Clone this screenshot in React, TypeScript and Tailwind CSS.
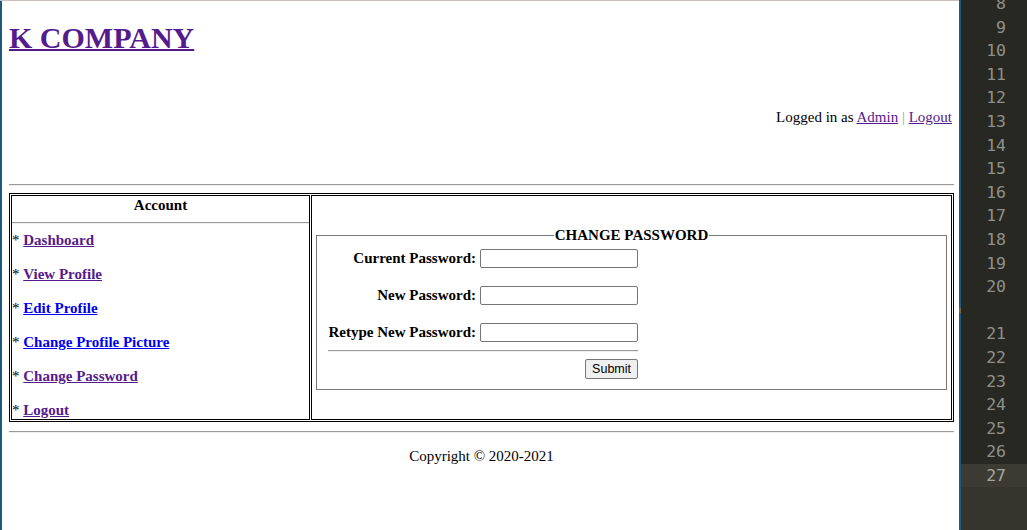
import React from "react";

const serif = "font-['Liberation_Serif','Times_New_Roman',serif]";

function Hr({ className = "" }: { className?: string }) {
  return <div className={`h-[2px] border-t border-b border-t-[#9a9a9a] border-b-[#eeeeee] ${className}`} />;
}

const links: { label: string; color: string }[] = [
  { label: "Dashboard", color: "text-[#551a8b]" },
  { label: "View Profile", color: "text-[#551a8b]" },
  { label: "Edit Profile", color: "text-[#0000ee]" },
  { label: "Change Profile Picture", color: "text-[#0000ee]" },
  { label: "Change Password", color: "text-[#551a8b]" },
  { label: "Logout", color: "text-[#551a8b]" },
];

const rows = ["Current Password:", "New Password:", "Retype New Password:"];

const lineNums: string[] = ["8", "9", "10", "11", "12", "13", "14", "15", "16", "17", "18", "19", "20", "", "21", "22", "23", "24", "25", "26"];

export default function App() {
  return (
    <div className="flex w-[1027px] h-[530px] overflow-hidden bg-white">
      {/* page */}
      <div className="flex flex-col w-[959px] shrink-0">
        <div className="h-px bg-[#cbc0bd]" />
        <div className="flex flex-1">
          <div className="w-[2px] bg-[#1d5a7c]" />
          <div className={`flex-1 pl-[7px] pr-[5px] text-[15px] leading-[17px] text-black ${serif}`}>
            <h1 className="mt-[20px] text-[30px] leading-[34px] font-bold">
              <a className="text-[#551a8b] underline decoration-2 cursor-pointer">K COMPANY</a>
            </h1>
            <div className="mt-[54px] text-right pr-[2px]">
              Logged in as <a className="text-[#551a8b] underline">Admin</a>{" "}
              <span className="text-[#9a9aa8]">|</span>{" "}
              <a className="text-[#551a8b] underline">Logout</a>
            </div>
            <Hr className="mt-[58px]" />
            {/* table */}
            <div className="mt-[7px] border border-black p-[1px] flex gap-[1px]">
              <div className="w-[299px] shrink-0 border border-black pt-[1px]">
                <div className="text-center font-bold">Account</div>
                <Hr className="mt-[8px] mb-[8px]" />
                <div className="flex flex-col gap-[17px]">
                  {links.map((l) => (
                    <div key={l.label} className="whitespace-nowrap">
                      *{" "}
                      <a className={`font-bold underline ${l.color}`}>{l.label}</a>
                    </div>
                  ))}
                </div>
              </div>
              <div className="flex-1 border border-black p-[1px] flex items-center">
                <div className="flex-1 mx-[3px]">
                  <div className="flex h-[17px]">
                    <div className="flex-1 self-end h-[8px] border-l border-t border-[#777777]" />
                    <span className="font-bold px-[1px] pt-[1px] leading-[16px] whitespace-nowrap">CHANGE PASSWORD</span>
                    <div className="flex-1 self-end h-[8px] border-r border-t border-[#777777]" />
                  </div>
                  <div className="border-x border-b border-[#777777] pl-[11px] pb-[10px]">
                    <div className="w-[310px] pt-[6px]">
                      <div className="flex flex-col gap-[18px]">
                        {rows.map((r) => (
                          <div key={r} className="flex items-center h-[19px] gap-[4px]">
                            <div className="w-[148px] text-right font-bold whitespace-nowrap">{r}</div>
                            <div className="w-[158px] h-[19px] border border-[#767676] rounded-[2px] bg-white" />
                          </div>
                        ))}
                      </div>
                      <Hr className="mt-[8px]" />
                      <div className="mt-[7px] flex justify-end">
                        <button className="h-[20px] px-[6px] border border-[#767676] rounded-[2px] bg-[#efefef] text-[12.5px] leading-[18px] text-black font-['Liberation_Sans',Arial,sans-serif]">
                          Submit
                        </button>
                      </div>
                    </div>
                  </div>
                </div>
              </div>
            </div>
            <Hr className="mt-[9px]" />
            <div className="mt-[15px] text-center">Copyright © 2020-2021</div>
          </div>
        </div>
      </div>
      {/* divider */}
      <div className="w-[2px] shrink-0 bg-[#1d5a7c] flex flex-col">
        <div className="h-[308px]" />
        <div className="h-[5px] bg-[#7a6440]" />
      </div>
      {/* editor gutter */}
      <div className="flex-1 flex flex-col bg-[#272822] font-['DejaVu_Sans_Mono',monospace] text-[16.5px] text-[#8f908a]">
        <div className="-mt-[8px]">
          {lineNums.map((n, i) => (
            <div key={i} className="h-[23.6px] leading-[23.6px] text-right pr-[21px]">
              {n || "\u00a0"}
            </div>
          ))}
        </div>
        <div className="flex-1 bg-[#35352e]">
          <div className="h-[23.6px] leading-[23.6px] text-right pr-[21px] bg-[#3c3b33] text-[#a5a5a0]">27</div>
        </div>
      </div>
    </div>
  );
}
